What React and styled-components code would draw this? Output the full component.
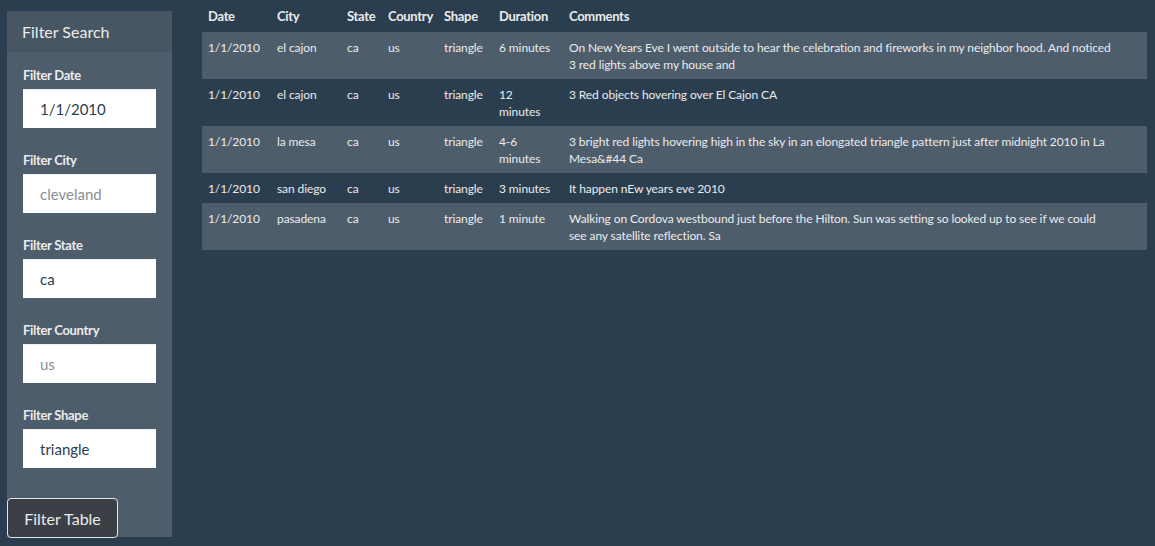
import styled, { createGlobalStyle } from "styled-components";

const GlobalStyle = createGlobalStyle`
  html, body {
    margin: 0;
    padding: 0;
    background: #2b3e50;
    color: #ebebeb;
    font-family: Lato, "Open Sans", sans-serif;
  }
  * { box-sizing: border-box; }
`;

const Page = styled.div`
  display: flex;
  align-items: flex-start;
  gap: 30px;
  padding: 0 8px 0 7px;
  min-height: 546px;
`;

const Panel = styled.aside`
  width: 165px;
  flex: none;
  margin-top: 11px;
  background: #4e5d6c;
  display: flex;
  flex-direction: column;
`;

const PanelHeading = styled.h3`
  margin: 0;
  padding: 10px 15px;
  background: #485563;
  font-size: 16px;
  font-weight: 400;
  line-height: 21px;
  color: #ebebeb;
`;

const PanelBody = styled.form`
  display: flex;
  flex-direction: column;
  gap: 24px;
  padding: 15px 16px 0 16px;
`;

const Field = styled.div`
  display: flex;
  flex-direction: column;
  gap: 5px;
`;

const Label = styled.label`
  font-size: 13px;
  font-weight: 700;
  line-height: 17px;
  color: #ebebeb;
  letter-spacing: -0.3px;
`;

const Input = styled.input`
  width: 133px;
  height: 39px;
  border: none;
  border-top: 1px solid #eef0f2;
  border-radius: 0;
  padding: 0 17px;
  font-family: inherit;
  font-size: 15px;
  color: #2b3e50;
  background: #fff;
  outline: none;
  &::placeholder { color: #8a8f96; }
`;

const Footer = styled.div`
  display: flex;
  padding-top: 30px;
  margin-bottom: -1px;
`;

const Button = styled.button`
  height: 40px;
  width: 111px;
  background: #3b4047;
  color: #ebebeb;
  border: 1px solid #e6e6e6;
  border-radius: 4px;
  font-family: inherit;
  font-size: 16px;
  padding: 0;
`;

const Table = styled.table`
  width: 945px;
  table-layout: fixed;
  border-collapse: collapse;
  font-size: 12px;
  line-height: 17px;
  color: #ebebeb;
`;

const Th = styled.th`
  text-align: left;
  font-size: 13px;
  font-weight: 700;
  padding: 8px 6px 7px;
  letter-spacing: -0.3px;
  width: ${(p) => (p.$w ? `${p.$w}px` : "auto")};
`;

const Row = styled.tr`
  background: ${(p) => (p.$odd ? "#4e5d6c" : "transparent")};
`;

const Td = styled.td`
  padding: 6.5px 8px 6.5px 6px;
  vertical-align: top;
  letter-spacing: -0.1px;
`;

const Line = styled.span`
  display: block;
  white-space: nowrap;
`;

const columns = [
  ["Date", 69],
  ["City", 70],
  ["State", 41],
  ["Country", 56],
  ["Shape", 55],
  ["Duration", 70],
  ["Comments", null],
];

const rows = [
  ["1/1/2010", "el cajon", "ca", "us", "triangle", "6 minutes", ["On New Years Eve I went outside to hear the celebration and fireworks in my neighbor hood. And noticed", "3 red lights above my house and"]],
  ["1/1/2010", "el cajon", "ca", "us", "triangle", "12 minutes", ["3 Red objects hovering over El Cajon CA"]],
  ["1/1/2010", "la mesa", "ca", "us", "triangle", "4-6 minutes", ["3 bright red lights hovering high in the sky in an elongated triangle pattern just after midnight 2010 in La", "Mesa&#44 Ca"]],
  ["1/1/2010", "san diego", "ca", "us", "triangle", "3 minutes", ["It happen nEw years eve 2010"]],
  ["1/1/2010", "pasadena", "ca", "us", "triangle", "1 minute", ["Walking on Cordova westbound just before the Hilton. Sun was setting so looked up to see if we could", "see any satellite reflection. Sa"]],
];

const filters = [
  ["Filter Date", "1/1/2010", "1/1/2010"],
  ["Filter City", "", "cleveland"],
  ["Filter State", "ca", "ca"],
  ["Filter Country", "", "us"],
  ["Filter Shape", "triangle", "triangle"],
];

export default function App() {
  return (
    <>
      <GlobalStyle />
      <Page>
        <Panel>
          <PanelHeading>Filter Search</PanelHeading>
          <PanelBody onSubmit={(e) => e.preventDefault()}>
            {filters.map(([label, value, placeholder]) => (
              <Field key={label}>
                <Label>{label}</Label>
                <Input defaultValue={value} placeholder={placeholder} />
              </Field>
            ))}
          </PanelBody>
          <Footer>
            <Button type="button">Filter Table</Button>
          </Footer>
        </Panel>
        <Table>
          <thead>
            <tr>
              {columns.map(([name, w]) => (
                <Th key={name} $w={w}>{name}</Th>
              ))}
            </tr>
          </thead>
          <tbody>
            {rows.map((r, i) => (
              <Row key={i} $odd={i % 2 === 0}>
                {r.slice(0, 6).map((c, j) => (
                  <Td key={j}>{c}</Td>
                ))}
                <Td>
                  {r[6].map((line, k) => (
                    <Line key={k}>{line}</Line>
                  ))}
                </Td>
              </Row>
            ))}
          </tbody>
        </Table>
      </Page>
    </>
  );
}
